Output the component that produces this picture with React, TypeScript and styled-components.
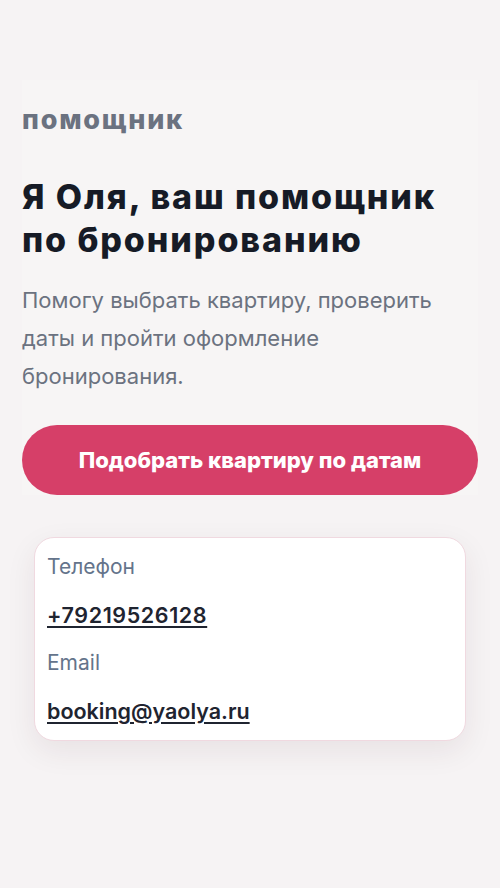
import { createGlobalStyle, styled } from 'styled-components';

const GlobalStyle = createGlobalStyle`
  html, body {
    margin: 0;
    padding: 0;
    background: #f6f3f4;
  }
  body {
    font-family: Inter, 'Noto Sans', sans-serif;
    -webkit-font-smoothing: antialiased;
  }
  * {
    box-sizing: border-box;
  }
`;

const Page = styled.main`
  min-height: 888px;
  padding: 80px 22px 0;
`;

const Hero = styled.section`
  display: flex;
  flex-direction: column;
  background: #f7f5f5;
  padding-top: 23px;
`;

const Eyebrow = styled.div`
  font-size: 27px;
  line-height: 34px;
  font-weight: 800;
  letter-spacing: 1.8px;
  color: #6b7280;
`;

const Title = styled.h1`
  margin: 38px 0 0;
  font-size: 34px;
  line-height: 43px;
  font-weight: 800;
  letter-spacing: 1.9px;
  color: #161b26;
`;

const Lead = styled.p`
  margin: 20px 0 0;
  font-size: 22px;
  line-height: 38px;
  color: #6b7280;
`;

const Cta = styled.button`
  margin-top: 30px;
  height: 70px;
  width: 100%;
  border: 0;
  border-radius: 35px;
  background: #d63f68;
  color: #fff;
  font-family: inherit;
  font-size: 22px;
  font-weight: 800;
  cursor: pointer;
`;

const ContactCard = styled.div`
  margin: 42px 12px 0;
  padding: 14px 12px 14px;
  display: flex;
  flex-direction: column;
  gap: 18px;
  background: #fff;
  border: 1px solid #f0d9e0;
  border-radius: 20px;
  box-shadow: 0 10px 30px rgba(60, 30, 40, 0.08);
`;

const Label = styled.div`
  font-size: 21px;
  line-height: 30px;
  color: #64748b;
`;

const Value = styled.a<{ $spacing?: number }>`
  font-size: 21.5px;
  line-height: 30px;
  font-weight: 600;
  letter-spacing: ${({ $spacing }) => $spacing ?? 0}px;
  color: #1f2430;
  text-decoration: underline;
  text-underline-offset: 3px;
`;

export default function App() {
  return (
    <>
      <GlobalStyle />
      <Page>
        <Hero>
          <Eyebrow>помощник</Eyebrow>
          <Title>
            Я Оля, ваш помощник
            <br />
            по бронированию
          </Title>
          <Lead>
            Помогу выбрать квартиру, проверить даты и пройти оформление
            бронирования.
          </Lead>
          <Cta>Подобрать квартиру по датам</Cta>
        </Hero>
        <ContactCard>
          <Label>Телефон</Label>
          <Value href="tel:+79219526128" $spacing={0.6}>
            +79219526128
          </Value>
          <Label>Email</Label>
          <Value href="mailto:booking@yaolya.ru">booking@yaolya.ru</Value>
        </ContactCard>
      </Page>
    </>
  );
}
